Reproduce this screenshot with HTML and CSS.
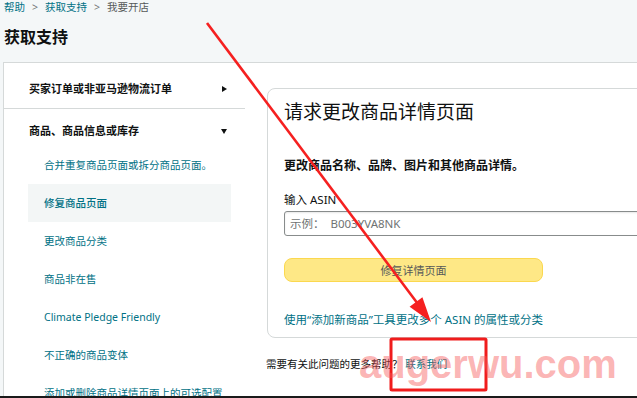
FILE: index.html
```html
<!DOCTYPE html>
<html lang="zh-CN">
<head>
    <meta charset="UTF-8">
    <meta name="viewport" content="width=device-width, initial-scale=1.0">
    <title>获取支持</title>
    <link rel="stylesheet" href="styles.css">
</head>
<body>
    <div class="page">
        <!-- Header -->
        <header class="page-head">
            <nav class="crumbs">
                <a href="#">帮助</a><span class="sep">&gt;</span><a href="#">获取支持</a><span class="sep">&gt;</span><span class="current">我要开店</span>
            </nav>
            <h1 class="page-title">获取支持</h1>
        </header>

        <div class="layout">
            <!-- Sidebar -->
            <aside class="sidebar">
                <div class="group first">
                    <div class="group-head">买家订单或非亚马逊物流订单<span class="caret-right"></span></div>
                </div>
                <div class="group">
                    <div class="group-head second">商品、商品信息或库存<span class="caret-down"></span></div>
                    <ul class="topics">
                        <li>合并重复商品页面或拆分商品页面。</li>
                        <li class="active">修复商品页面</li>
                        <li>更改商品分类</li>
                        <li>商品非在售</li>
                        <li>Climate Pledge Friendly</li>
                        <li>不正确的商品变体</li>
                        <li>添加或删除商品详情页面上的可选配置</li>
                    </ul>
                </div>
            </aside>

            <!-- Main -->
            <main class="content">
                <section class="card">
                    <h2 class="card-title">请求更改商品详情页面</h2>
                    <p class="card-desc">更改商品名称、品牌、图片和其他商品详情。</p>
                    <label class="field-label" for="asin">输入 ASIN</label>
                    <input class="field" id="asin" type="text" placeholder="示例：  B003YVA8NK">
                    <button class="btn-yellow">修复详情页面</button>
                    <a class="card-link" href="#">使用“添加新商品”工具更改多个 ASIN 的属性或分类</a>
                </section>
                <p class="more-help">需要有关此问题的更多帮助？ <a href="#">联系我们</a></p>
            </main>
        </div>
    </div>

    <!-- Annotation layer -->
    <svg class="markup" width="637" height="398" viewBox="0 0 637 398">
        <line x1="207" y1="23" x2="418" y2="304" stroke="#f52020" stroke-width="2.6"/>
        <polygon points="431,322 409.6,306.8 422.4,297.2" fill="#f52020"/>
        <rect x="391" y="339" width="95" height="51" fill="none" stroke="#f01c1c" stroke-width="3" rx="1"/>
    </svg>
    <div class="watermark">augerwu.com</div>
    <div class="frame-edge"></div>
</body>
</html>
```

FILE: styles.css
```css
/* General Styles */
body {
    margin: 0;
    font-family: "Noto Sans", "Noto Sans CJK SC", sans-serif;
    background: #f4f7f8;
    color: #0f1111;
    width: 637px;
    height: 398px;
    overflow: hidden;
    position: relative;
}

a {
    color: #007185;
    text-decoration: none;
}

/* Header */
.page-head {
    padding: 0 4px;
}

.crumbs {
    font-size: 10.5px;
    line-height: 14px;
    height: 14px;
    color: #565959;
}

.crumbs .sep {
    margin: 0 7px;
    color: #6f7373;
}

.page-title {
    font-size: 16px;
    line-height: 22px;
    font-weight: 700;
    margin: 12px 0 14px;
}

/* Layout */
.layout {
    display: flex;
    margin-left: 3px;
    background: #fff;
    border-top: 1px solid #d5d9d9;
    height: 335px;
    overflow: hidden;
}

.sidebar {
    width: 241px;
    flex-shrink: 0;
    border-left: 1px solid #d5d9d9;
}

.group.first {
    border-bottom: 1px solid #d5d9d9;
}

.group-head {
    display: flex;
    justify-content: space-between;
    align-items: center;
    font-size: 11px;
    font-weight: 700;
    line-height: 16px;
    padding: 18px 18px 11px 25px;
}

.group-head.second {
    padding-top: 14px;
    padding-bottom: 7px;
}

.caret-right {
    width: 0;
    height: 0;
    border-top: 3px solid transparent;
    border-bottom: 3px solid transparent;
    border-left: 5px solid #0f1111;
}

.caret-down {
    width: 0;
    height: 0;
    border-left: 3.5px solid transparent;
    border-right: 3.5px solid transparent;
    border-top: 5px solid #0f1111;
}

.topics {
    list-style: none;
    margin: 0 0 0 24px;
    padding: 0;
    width: 203px;
}

.topics li {
    height: 38px;
    line-height: 38px;
    padding-left: 16px;
    font-size: 10.5px;
    color: #007185;
    white-space: nowrap;
}

.topics li.active {
    background: #f3f6f6;
    font-weight: 500;
}

/* Main */
.content {
    flex: 1;
    padding: 25px 0 0 21px;
    overflow: hidden;
}

.card {
    width: 430px;
    margin-left: 1px;
    border: 1px solid #d5d9d9;
    border-radius: 8px;
    padding: 12px 16px 9px;
    display: flex;
    flex-direction: column;
    align-items: flex-start;
}

.card-title {
    font-size: 19px;
    line-height: 22px;
    font-weight: 400;
    margin: 0;
}

.card-desc {
    font-size: 12px;
    line-height: 16px;
    font-weight: 700;
    margin: 35px 0 0;
}

.field-label {
    font-size: 11.5px;
    line-height: 16px;
    margin-top: 18px;
}

.field {
    box-sizing: border-box;
    width: 420px;
    height: 25px;
    margin-top: 3px;
    border: 1px solid #888c8c;
    border-radius: 3px;
    padding: 0 5px;
    font-family: inherit;
    font-size: 11.5px;
    box-shadow: inset 0 1px 2px rgba(15, 17, 17, 0.1);
}

.field::placeholder {
    color: #6f7373;
}

.btn-yellow {
    width: 259px;
    height: 24px;
    margin-top: 22px;
    background: #fee886;
    border: 1px solid #fbd84f;
    border-radius: 8px;
    font-family: inherit;
    font-size: 11px;
    color: #565959;
}

.card-link {
    font-size: 11.5px;
    line-height: 16px;
    margin-top: 30px;
}

.more-help {
    margin: 18px 0 0;
    font-size: 10.5px;
    line-height: 16px;
}

/* Annotation layer */
.markup {
    position: absolute;
    top: 0;
    left: 0;
    pointer-events: none;
}

.watermark {
    position: absolute;
    left: 359px;
    top: 342px;
    font-family: "Liberation Sans", sans-serif;
    font-weight: 700;
    font-size: 40px;
    line-height: 44px;
    color: rgba(246, 90, 90, 0.45);
    pointer-events: none;
}

.frame-edge {
    position: absolute;
    left: 0;
    right: 0;
    bottom: 0;
    height: 2px;
    background: #1a1a1a;
}
```
